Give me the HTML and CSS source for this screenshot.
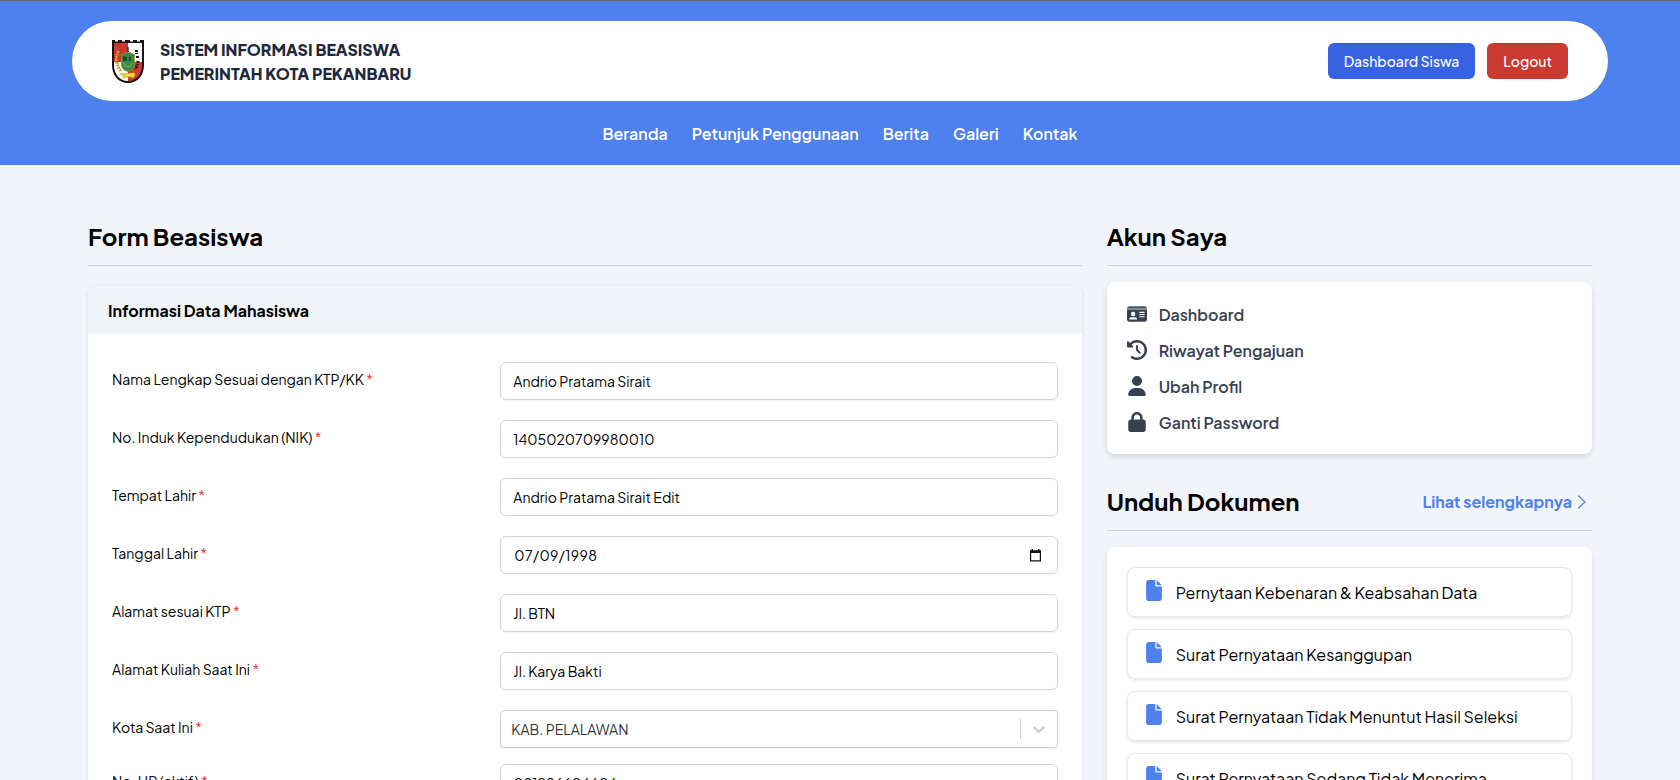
FILE: index.html
```html
<!DOCTYPE html>
<html lang="id">
<head>
<meta charset="utf-8">
<title>Form Beasiswa</title>
<link rel="stylesheet" href="styles.css">
</head>
<body>
<svg class="defs" width="0" height="0">
  <symbol id="file" viewBox="0 0 384 512"><path d="M0 64C0 28.700 28.700 0 64 0H224V128c0 17.700 14.300 32 32 32H384V448c0 35.300-28.700 64-64 64H64c-35.300 0-64-28.700-64-64V64zm384 64H256V0L384 128z"/></symbol>
</svg>
<header class="header">
  <div class="topbar">
    <a class="brand">
      <svg class="logo" viewBox="0 0 32 43">
        <path d="M0 0h3v1.500h3V0h4v1.500h3V0h5v1.500h3V0h4v1.500h3V0h4v25c0 10-6 18-16 18S0 35 0 25z" fill="#1b1514"/>
        <path d="M2 3h14v19H2z" fill="#c9382c"/>
        <path d="M16 3h14v19H16zM2 22h14v19C7.500 41 2 34 2 25z" fill="#fff"/>
        <path d="M16 22h14v3c0 9-5.500 16-14 16z" fill="#d23b2d"/>
        <path d="M6.500 11c-3 7-3 14 2 20" fill="none" stroke="#d9b52e" stroke-width="2.600" stroke-dasharray="2 .8"/>
        <path d="M6.500 11c-2 8-1 14 3 20" fill="none" stroke="#8a6a1c" stroke-width=".6"/>
        <path d="M24.500 10v4m1 2v3m.500 2-.5 4m-.5 1-2 3" fill="none" stroke="#1b1b1b" stroke-width="3" stroke-dasharray="2 1"/>
        <path d="M9.500 14.500 16 12l6.500 2.500v10c0 4-2.500 6-6.500 7-4-1-6.500-3-6.500-7z" fill="#388c45" stroke="#a88a2c" stroke-width=".8"/>
        <path d="M16 7v5M12 16v5m2-4v4m4-4v4" stroke="#152d18" stroke-width="1.300"/>
        <path d="M12 23c0 5 8 5 8 0" fill="none" stroke="#a5b43a"/>
        <path d="M8 34c2-2 4 0 8-.5s6-1.500 7.500.5l-2 4c-4-2-7-1-10 .5l-1-3z" fill="#ead943" stroke="#a98a22" stroke-width=".4"/>
      </svg>
      <span class="brand-name"><span>SISTEM INFORMASI BEASISWA</span><span>PEMERINTAH KOTA PEKANBARU</span></span>
    </a>
    <div class="actions">
      <a class="btn btn-blue">Dashboard Siswa</a>
      <a class="btn btn-red">Logout</a>
    </div>
  </div>
  <nav class="nav"><a>Beranda</a><a>Petunjuk Penggunaan</a><a>Berita</a><a>Galeri</a><a>Kontak</a></nav>
</header>
<main class="content">
  <section>
    <div class="heading"><h2>Form Beasiswa</h2></div>
    <div class="form-card">
      <h3 class="form-title">Informasi Data Mahasiswa</h3>
      <div class="form-body">
        <div class="row"><label>Nama Lengkap Sesuai dengan KTP/KK <i>*</i></label><div class="field">Andrio Pratama Sirait</div></div>
        <div class="row"><label>No. Induk Kependudukan (NIK) <i>*</i></label><div class="field">1405020709980010</div></div>
        <div class="row"><label>Tempat Lahir <i>*</i></label><div class="field">Andrio Pratama Sirait Edit</div></div>
        <div class="row"><label>Tanggal Lahir <i>*</i></label><div class="field date">07/09/1998
          <svg width="11" height="13" viewBox="0 0 11 13"><path d="M1.500 0h1.500v1.200h5V0h1.500v1.200H11V12.500H0V1.200h1.500zM1.200 4v7.300h8.600V4z" fill="#111" fill-rule="evenodd"/></svg></div></div>
        <div class="row"><label>Alamat sesuai KTP <i>*</i></label><div class="field">Jl. BTN</div></div>
        <div class="row"><label>Alamat Kuliah Saat Ini <i>*</i></label><div class="field">Jl. Karya Bakti</div></div>
        <div class="row row-select"><label>Kota Saat Ini <i>*</i></label><div class="field select"><span>KAB. PELALAWAN</span><b class="sep"></b>
          <svg width="20" height="20" viewBox="0 0 20 20" fill="#ccc"><path d="M4.516 7.548c0.436-0.446 1.043-0.481 1.576 0l3.908 3.747 3.908-3.747c0.533-0.481 1.141-0.446 1.574 0 0.436 0.445 0.408 1.197 0 1.615-0.406 0.418-4.695 4.502-4.695 4.502-0.217 0.223-0.502 0.335-0.787 0.335s-0.570-0.112-0.789-0.335c0 0-4.287-4.084-4.695-4.502s-0.436-1.170 0-1.615z"/></svg></div></div>
        <div class="row"><label>No. HP (aktif) <i>*</i></label><div class="field">081286606606</div></div>
      </div>
    </div>
  </section>
  <aside>
    <div class="heading"><h2>Akun Saya</h2></div>
    <ul class="menu">
      <li><svg viewBox="0 0 576 512"><path opacity=".9" d="M0 96l576 0c0-35.300-28.700-64-64-64L64 32C28.700 32 0 60.700 0 96z"/><path opacity=".5" d="M0 96h576v32H0z"/><path fill-rule="evenodd" d="M0 128V416c0 35.300 28.700 64 64 64H512c35.300 0 64-28.700 64-64V128H0zM64 405.300c0-29.500 23.900-53.300 53.300-53.300H234.700c29.500 0 53.300 23.900 53.300 53.300c0 5.900-4.800 10.700-10.700 10.700H74.700c-5.900 0-10.700-4.800-10.700-10.700zM176 192a64 64 0 1 1 0 128 64 64 0 1 1 0-128zm176 16c0-8.800 7.200-16 16-16H496c8.800 0 16 7.200 16 16s-7.200 16-16 16H368c-8.800 0-16-7.200-16-16zm0 64c0-8.800 7.200-16 16-16H496c8.800 0 16 7.200 16 16s-7.200 16-16 16H368c-8.800 0-16-7.200-16-16zm0 64c0-8.800 7.200-16 16-16H496c8.800 0 16 7.200 16 16s-7.200 16-16 16H368c-8.800 0-16-7.200-16-16z"/></svg>Dashboard</li>
      <li><svg viewBox="0 0 512 512"><path d="M75 75L41 41C25.900 25.900 0 36.600 0 57.900V168c0 13.300 10.700 24 24 24H134.100c21.400 0 32.100-25.900 17-41l-30.800-30.800C155 85.500 203 64 256 64c106 0 192 86 192 192s-86 192-192 192c-40.800 0-78.600-12.700-109.700-34.400c-14.500-10.100-34.400-6.600-44.600 7.900s-6.600 34.400 7.900 44.600C151.200 495 201.700 512 256 512c141.400 0 256-114.600 256-256S397.400 0 256 0C185.300 0 121.300 28.700 75 75zm181 53c-13.300 0-24 10.700-24 24V256c0 6.400 2.500 12.500 7 17l72 72c9.400 9.400 24.600 9.400 33.900 0s9.400-24.600 0-33.900l-65-65V152c0-13.300-10.700-24-24-24z"/></svg>Riwayat Pengajuan</li>
      <li><svg viewBox="0 0 448 512"><path d="M224 256A128 128 0 1 0 224 0a128 128 0 1 0 0 256zm-45.700 48C79.800 304 0 383.800 0 482.300C0 498.700 13.300 512 29.700 512H418.300c16.400 0 29.700-13.300 29.700-29.700C448 383.800 368.200 304 269.700 304H178.300z"/></svg>Ubah Profil</li>
      <li><svg viewBox="0 0 448 512"><path d="M144 144v48H304V144c0-44.200-35.800-80-80-80s-80 35.800-80 80zM80 192V144C80 64.500 144.500 0 224 0s144 64.500 144 144v48h16c35.300 0 64 28.700 64 64V448c0 35.300-28.700 64-64 64H64c-35.300 0-64-28.700-64-64V256c0-35.300 28.700-64 64-64H80z"/></svg>Ganti Password</li>
    </ul>
    <div class="heading docs-heading"><h2>Unduh Dokumen</h2><a class="more">Lihat selengkapnya<svg width="8" height="14" viewBox="0 0 8 14"><path d="M.6 1 7 7 .6 13" fill="none" stroke="currentColor" stroke-width="1.200" stroke-linecap="round"/></svg></a></div>
    <div class="docs">
      <a class="doc"><svg><use href="#file"/></svg>Pernytaan Kebenaran &amp; Keabsahan Data</a>
      <a class="doc"><svg><use href="#file"/></svg>Surat Pernyataan Kesanggupan</a>
      <a class="doc"><svg><use href="#file"/></svg>Surat Pernyataan Tidak Menuntut Hasil Seleksi</a>
      <a class="doc"><svg><use href="#file"/></svg>Surat Pernyataan Sedang Tidak Menerima</a>
    </div>
  </aside>
</main>
</body>
</html>
```
FILE: styles.css
```css
* { box-sizing: border-box; }
body {
  margin: 0; height: 780px; overflow: hidden;
  background: #f1f5f9; color: #000;
  font: 16px/24px "Plus Jakarta Sans", Inter, sans-serif;
}
h2, h3, ul { margin: 0; padding: 0; }
.defs { display: block; }

.header { height: 165px; background: #4e80ee; border-top: 1px solid #5f6470; padding-top: 20px; }
.topbar {
  width: 1536px; height: 80px; margin: 0 auto; padding: 0 40px;
  display: flex; align-items: center; justify-content: space-between;
  background: #fff; border-radius: 40px;
}
.brand { display: flex; align-items: center; gap: 16px; }
.logo { width: 32px; height: 43px; }
.brand-name { display: flex; flex-direction: column; padding-top: 1px; color: #1e293b; font-weight: 800; }
.actions { display: flex; gap: 12px; }
.btn { height: 36px; padding: 0 16px; border-radius: 6px; color: #fff; font-size: 14px; font-weight: 500; line-height: 36px; }
.btn-blue { background: #3762e3; }
.btn-red { background: #ca3a31; }
.nav { display: flex; justify-content: center; gap: 24px; margin-top: 21px; color: #fff; font-weight: 600; }

.content {
  width: 1504px; margin: 52px auto 0;
  display: grid; grid-template-columns: 994.33px 485.33px; gap: 24.33px; align-items: start;
}
.heading { height: 49px; border-bottom: 1px solid #cbd5e1; display: flex; justify-content: space-between; }
.heading h2 { font-size: 24px; line-height: 38px; font-weight: 700; }

.form-card { margin-top: 20px; background: #fff; border-radius: 8px; box-shadow: 0 1px 4px rgba(0, 0, 0, .1); }
.form-title {
  height: 48px; padding: 0 20px; border-radius: 8px 8px 0 0;
  background: #f1f5f9; font-size: 16px; line-height: 49px; font-weight: 700;
}
.form-body { padding: 28px 24px; }
.row { display: grid; grid-template-columns: 388.33px 558px; height: 58px; font-size: 14px; }
.row-select { height: 54px; }
.row label { line-height: 20px; padding-top: 7px; }
.row label i { color: #ef4444; font-style: normal; }
.field {
  height: 38px; padding: 0 12px; line-height: 36px;
  border: 1px solid #d1d5db; border-radius: 6px; box-shadow: 0 1px 2px rgba(0, 0, 0, .05);
}
.date { display: flex; align-items: center; justify-content: space-between; padding: 0 16px 0 13px; letter-spacing: .4px; }
.select { display: flex; align-items: center; padding: 0 8px 0 10px; border-color: #ccc; border-radius: 4px; color: #333; }
.select span { flex: 1; }
.sep { width: 1px; height: 20px; margin-right: 8px; background: #ccc; }

.menu {
  margin-top: 16px; height: 172px; padding: 14px 20px; list-style: none;
  background: #fff; border-radius: 8px; box-shadow: 0 3px 6px rgba(0, 0, 0, .12);
  color: #374151; font-weight: 600;
}
.menu li { height: 36px; display: flex; align-items: center; gap: 12px; line-height: 25px; }
.menu svg { width: 20px; height: 20px; fill: #374151; }

.docs-heading { margin-top: 28px; }
.more { display: flex; align-items: center; gap: 6px; height: 40px; padding-right: 6px; color: #4e80ee; font-weight: 700; }
.docs { margin-top: 16px; padding: 20px; background: #fff; border-radius: 8px; box-shadow: 0 3px 6px rgba(0, 0, 0, .1); display: grid; gap: 12px; }
.doc {
  height: 50px; padding: 1px 18px 0; display: flex; align-items: center; gap: 14px;
  border: 1px solid #e5e7eb; border-radius: 8px; box-shadow: 0 1px 3px rgba(0, 0, 0, .12);
}
.doc svg { width: 16px; height: 21px; margin-bottom: 5px; fill: #4e80ee; }
```
